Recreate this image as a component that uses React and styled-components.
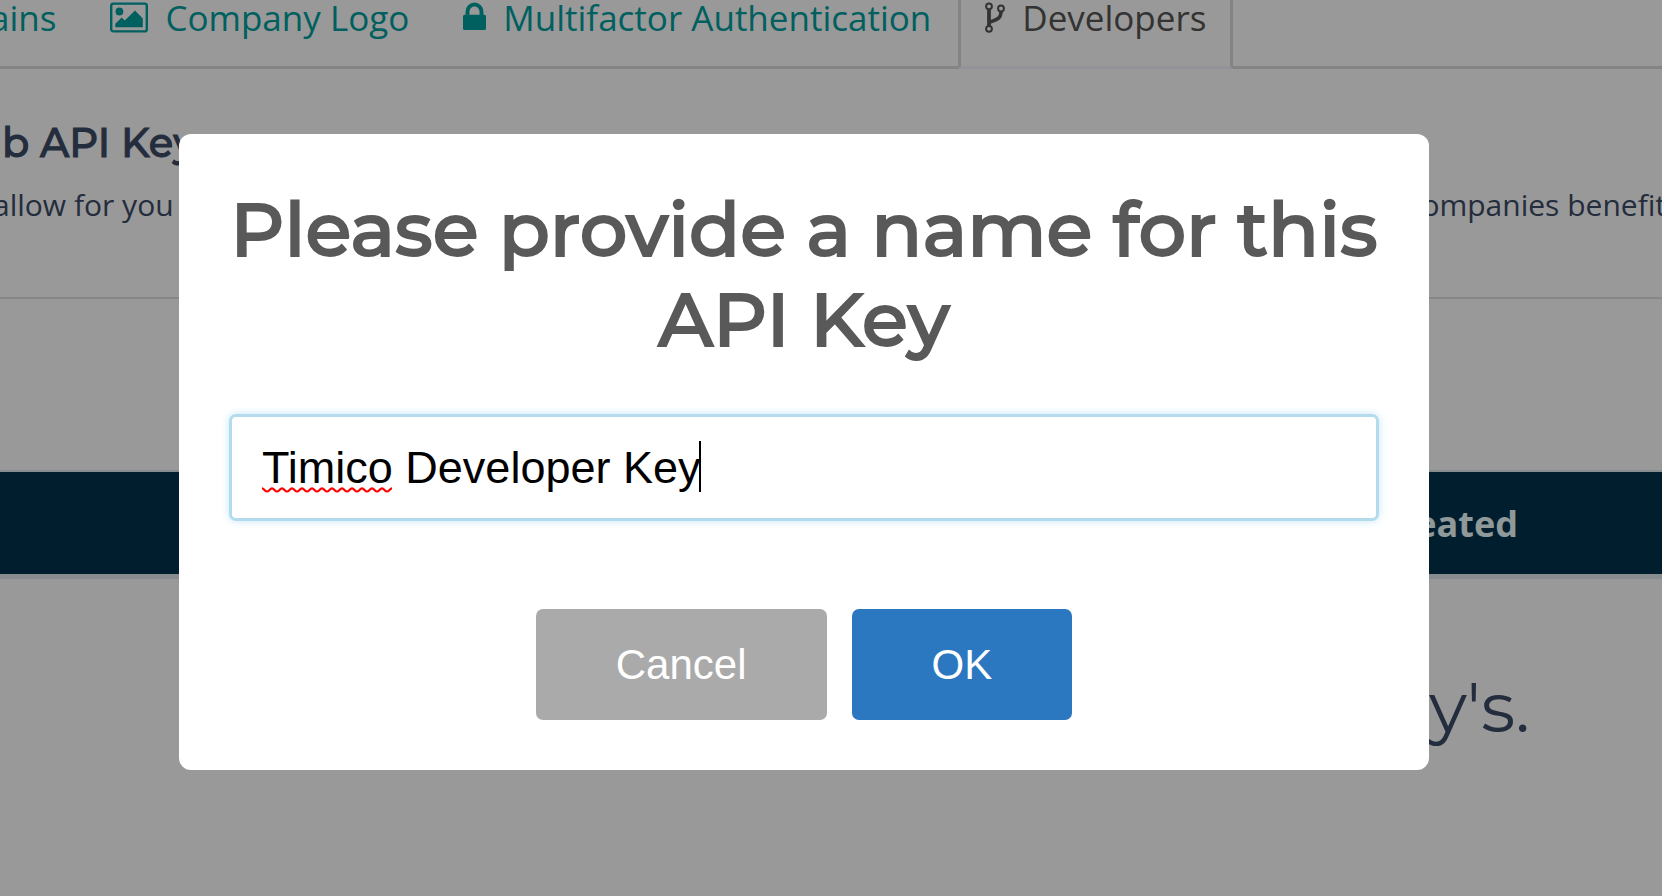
import React from "react";
import styled, { createGlobalStyle } from "styled-components";

const GlobalStyle = createGlobalStyle`
  *, *::before, *::after { box-sizing: border-box; }
  html, body, #root { height: 100%; }
  body {
    margin: 0;
    overflow: hidden;
    background: #fff;
    color: #3c4b66;
    font-family: "Open Sans", "Noto Sans", sans-serif;
  }
`;

const displayFont = `Montserrat, Inter, sans-serif`;

const Page = styled.main`
  overflow: hidden;
`;

const TabBar = styled.nav`
  display: flex;
  border-bottom: 3px solid #ddd;
`;

const Tab = styled.a`
  display: flex;
  flex: none;
  gap: 17px;
  margin-bottom: -3px;
  padding: 0 24px 30px;
  border: solid transparent;
  border-width: 0 3px 3px;
  color: ${(p) => (p.$active ? "#555" : "#009f9f")};
  font-size: 35px;
  line-height: 36px;
  text-decoration: none;
  ${(p) => p.$active && `border-color: #ddd; border-bottom-color: #f3f5fb;`}
  ${(p) => p.$cut && `margin-left: -37px;`}

  svg { display: block; flex: none; }
`;

const Intro = styled.header`
  padding: 50px 0 72px;
  border-bottom: 2px solid #e2e2e2;
`;

const Heading = styled.h2`
  margin: 0 0 18px;
  padding-left: 2px;
  font: 500 40px/48px ${displayFont};
  -webkit-text-stroke: 1px currentColor;
  paint-order: stroke fill;
`;

const Description = styled.p`
  display: flex;
  justify-content: space-between;
  margin: 0 -4px 0 -7px;
  font-size: 30px;
  line-height: 40px;
  white-space: nowrap;
`;

const KeyTable = styled.table`
  width: 100%;
  margin-top: 171px;
  border-collapse: separate;
  border-spacing: 0;
`;

const HeadCell = styled.th`
  height: 109px;
  padding: 0 144px 0 0;
  border-top: 2px solid #e2e9ee;
  border-bottom: 5px solid #e2e9ee;
  background: #00324e;
  background-clip: padding-box;
  color: #f0ffff;
  font-size: 36px;
  font-weight: 700;
  text-align: right;
`;

const EmptyCell = styled.td`
  padding: 86px 132px 0 0;
  font: 400 70px/84px ${displayFont};
  text-align: right;
`;

const Overlay = styled.div`
  position: fixed;
  inset: 0;
  display: flex;
  align-items: center;
  justify-content: center;
  padding: 8px 54px 0 0;
  background: rgba(0, 0, 0, 0.4);
`;

const Dialog = styled.form`
  width: 78%;
  max-width: 1250px;
  padding: 50px;
  border-radius: 12px;
  background: #fff;
`;

const Title = styled.h1`
  margin: 0 0 50px;
  color: #595959;
  font: 500 75px/90px ${displayFont};
  text-align: center;
  -webkit-text-stroke: 2px currentColor;
  paint-order: stroke fill;
`;

const Field = styled.label`
  position: relative;
  display: block;
`;

const NameInput = styled.input`
  display: block;
  width: 100%;
  height: 107px;
  padding: 0 30px;
  border: 3px solid #b4dbed;
  border-radius: 7px;
  outline: 0;
  box-shadow: 0 0 8px #c4e6f5;
  background: #fff;
  color: #000;
  caret-color: transparent;
  font: 45px "Liberation Sans", Arial, sans-serif;
`;

const SpellingMark = styled.svg`
  position: absolute;
  top: 73px;
  left: 33px;
`;

const Caret = styled.span`
  position: absolute;
  top: 27px;
  left: 470px;
  width: 2px;
  height: 51px;
  background: #000;
`;

const Actions = styled.div`
  display: flex;
  justify-content: center;
  gap: 25px;
  margin-top: 88px;
`;

const Button = styled.button`
  height: 111px;
  padding: 0 80px;
  border: 0;
  border-radius: 7px;
  background: ${(p) => (p.$primary ? "#2b77c0" : "#aaa")};
  color: #fff;
  font: 42px "Liberation Sans", Arial, sans-serif;
`;

const PictureIcon = () => (
  <svg width="38" height="34" viewBox="0 0 38 34" fill="currentColor" aria-hidden="true">
    <rect x="1.2" y="3.6" width="35.6" height="27.8" rx="2.2" fill="none" stroke="currentColor" strokeWidth="2.4" />
    <circle cx="9.4" cy="11.5" r="3.9" />
    <path d="M5.3 27.2v-3.4l6.4-6.3 3 3L25 10.5l7.8 8v8.7z" />
  </svg>
);

const LockIcon = () => (
  <svg width="23" height="34" viewBox="0 0 23 34" aria-hidden="true">
    <path d="M4.5 16v-4.5a7 7 0 0 1 14 0V16" fill="none" stroke="currentColor" strokeWidth="3.9" />
    <rect y="14.7" width="23" height="15.3" rx="1.6" fill="currentColor" />
  </svg>
);

const ForkIcon = () => (
  <svg width="20" height="34" viewBox="0 0 20 34" fill="none" stroke="currentColor" aria-hidden="true">
    <g strokeWidth="2">
      <circle cx="4" cy="6.3" r="2.9" />
      <circle cx="4" cy="28.8" r="2.9" />
      <circle cx="16" cy="8.5" r="2.9" />
    </g>
    <path d="M4 9v17" strokeWidth="3.8" />
    <path d="M16 11.5C16 19 11.5 19.6 4.5 22.3" strokeWidth="3.5" />
  </svg>
);

export default function App() {
  return (
    <>
      <GlobalStyle />
      <Page>
        <TabBar>
          <Tab href="#domains" $cut>ains</Tab>
          <Tab href="#logo"><PictureIcon />Company Logo</Tab>
          <Tab href="#mfa"><LockIcon />Multifactor Authentication</Tab>
          <Tab href="#developers" $active><ForkIcon />Developers</Tab>
        </TabBar>
        <Intro>
          <Heading>b API Key</Heading>
          <Description>
            <span>allow for you</span>
            <span>companies benefit</span>
          </Description>
        </Intro>
        <KeyTable>
          <thead>
            <tr><HeadCell scope="col">Created</HeadCell></tr>
          </thead>
          <tbody>
            <tr><EmptyCell>y's.</EmptyCell></tr>
          </tbody>
        </KeyTable>
      </Page>
      <Overlay>
        <Dialog role="dialog" aria-modal="true" aria-labelledby="dialog-title" onSubmit={(e) => e.preventDefault()}>
          <Title id="dialog-title">Please provide a name for this API Key</Title>
          <Field>
            <NameInput type="text" aria-labelledby="dialog-title" defaultValue="Timico Developer Key" />
            <SpellingMark width="130" height="6" aria-hidden="true">
              <defs>
                <pattern id="wave" width="10" height="6" patternUnits="userSpaceOnUse">
                  <path d="M-2 1.7L0 1.3C2 1.3 3 4.5 5 4.5S8 1.3 10 1.3l2 .4" fill="none" stroke="#f00" strokeWidth="2.2" />
                </pattern>
              </defs>
              <rect width="130" height="6" fill="url(#wave)" />
            </SpellingMark>
            <Caret />
          </Field>
          <Actions>
            <Button type="button">Cancel</Button>
            <Button type="submit" $primary>OK</Button>
          </Actions>
        </Dialog>
      </Overlay>
    </>
  );
}
